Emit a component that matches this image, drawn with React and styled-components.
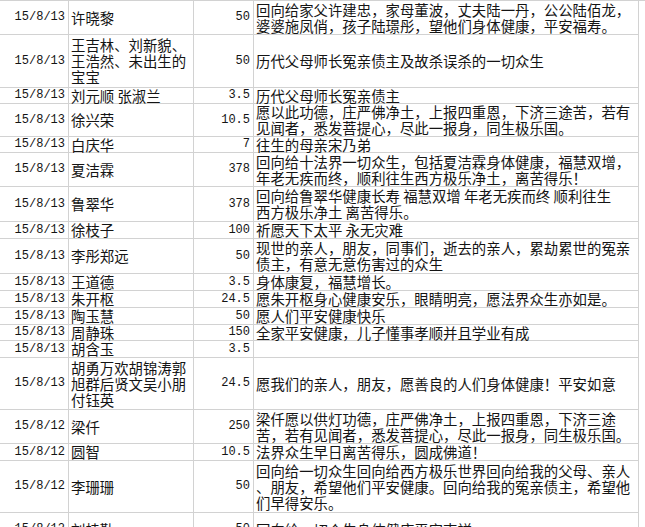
import React from 'react';
import styled, { createGlobalStyle } from 'styled-components';

const rows = [
    { h: 34, date: '15/8/13', name: ['许晓黎'], amt: '50', msg: ['回向给家父许建忠，家母董波，丈夫陆一丹，公公陆佰龙，', '婆婆施凤俏，孩子陆璟彤，望他们身体健康，平安福寿。'] },
    { h: 53, date: '15/8/13', name: ['王吉林、刘新貌、', '王浩然、未出生的', '宝宝'], amt: '50', msg: ['历代父母师长冤亲债主及故杀误杀的一切众生'] },
    { h: 16, date: '15/8/13', name: ['刘元顺 张淑兰'], amt: '3.5', msg: ['历代父母师长冤亲债主'] },
    { h: 33, date: '15/8/13', name: ['徐兴荣'], amt: '10.5', msg: ['愿以此功德，庄严佛净土，上报四重恩，下济三途苦，若有', '见闻者，悉发菩提心，尽此一报身，同生极乐国。'] },
    { h: 16, date: '15/8/13', name: ['白庆华'], amt: '7', msg: ['往生的母亲宋乃弟'] },
    { h: 34, date: '15/8/13', name: ['夏洁霖'], amt: '378', msg: ['回向给十法界一切众生，包括夏洁霖身体健康，福慧双增，', '年老无疾而终，顺利往生西方极乐净土，离苦得乐！'] },
    { h: 35, date: '15/8/13', name: ['鲁翠华'], amt: '378', msg: ['回向给鲁翠华健康长寿 福慧双增 年老无疾而终 顺利往生', '西方极乐净土 离苦得乐。'] },
    { h: 17, date: '15/8/13', name: ['徐枝子'], amt: '100', msg: ['祈愿天下太平 永无灾难'] },
    { h: 35, date: '15/8/13', name: ['李彤郑远'], amt: '50', msg: ['现世的亲人，朋友，同事们，逝去的亲人，累劫累世的冤亲', '债主，有意无意伤害过的众生'] },
    { h: 17, date: '15/8/13', name: ['王道德'], amt: '3.5', msg: ['身体康复，福慧增长。'] },
    { h: 17, date: '15/8/13', name: ['朱开枢'], amt: '24.5', msg: ['愿朱开枢身心健康安乐，眼睛明亮，愿法界众生亦如是。'] },
    { h: 17, date: '15/8/13', name: ['陶玉慧'], amt: '50', msg: ['愿人们平安健康快乐'] },
    { h: 16, date: '15/8/13', name: ['周静珠'], amt: '150', msg: ['全家平安健康，儿子懂事孝顺并且学业有成'] },
    { h: 17, date: '15/8/13', name: ['胡含玉'], amt: '3.5', msg: [] },
    { h: 52, date: '15/8/13', name: ['胡勇万欢胡锦涛郭', '旭群后贤文吴小朋', '付钰英'], amt: '24.5', msg: ['愿我们的亲人，朋友，愿善良的人们身体健康！平安如意'] },
    { h: 34, date: '15/8/12', name: ['梁仟'], amt: '250', msg: ['梁仟愿以供灯功德，庄严佛净土，上报四重恩，下济三途', '苦，若有见闻者，悉发菩提心，尽此一报身，同生极乐国。'] },
    { h: 17, date: '15/8/12', name: ['圆智'], amt: '10.5', msg: ['法界众生早日离苦得乐，圆成佛道！'] },
    { h: 52, date: '15/8/12', name: ['李珊珊'], amt: '50', msg: ['回向给一切众生回向给西方极乐世界回向给我的父母、亲人', '、朋友，希望他们平安健康。回向给我的冤亲债主，希望他', '们早得安乐。'] },
    { h: 34, date: '15/8/12', name: ['刘桂勤'], amt: '50', msg: ['回向给一切众生身体健康平安吉祥'] },
];

export default function App() {
    return (
        <Sheet>
            <GlobalStyle />
            {rows.map((r, i) => (
                <Row key={i} $h={r.h}>
                    <NumCell>{r.date}</NumCell>
                    <TextCell>
                        {r.name.map((l, j) => (
                            <Line key={j}>{l}</Line>
                        ))}
                    </TextCell>
                    <NumCell>{r.amt}</NumCell>
                    <TextCell>
                        {r.msg.map((l, j) => (
                            <Line key={j}>{l}</Line>
                        ))}
                    </TextCell>
                </Row>
            ))}
        </Sheet>
    );
}

const GlobalStyle = createGlobalStyle`
    html, body {
        margin: 0;
        padding: 0;
        background: #ffffff;
    }
`;

const Sheet = styled.div`
    width: 645px;
    height: 527px;
    overflow: hidden;
    background: #ffffff;
    border-top: 1px solid #d2d2d2;
    box-sizing: border-box;
`;

const Row = styled.div`
    display: grid;
    grid-template-columns: 69px 125px 60px 385px;
    height: ${(p) => p.$h}px;
`;

const Cell = styled.div`
    box-sizing: border-box;
    border-right: 1px solid #d2d2d2;
    border-bottom: 1px solid #d2d2d2;
    display: flex;
    flex-direction: column;
    justify-content: center;
    color: #141414;
    min-height: 0;
`;

const NumCell = styled(Cell)`
    align-items: flex-end;
    padding-right: 3px;
    font-family: 'Liberation Mono', 'DejaVu Sans Mono', monospace;
    font-size: 12px;
    line-height: 15px;
`;

const TextCell = styled(Cell)`
    align-items: flex-start;
    padding-left: 2px;
    font-family: 'Noto Sans CJK SC', 'Noto Sans', sans-serif;
    font-size: 14.4px;
    line-height: 16px;
    white-space: nowrap;
`;

const Line = styled.span`
    display: block;
    height: 16px;
`;
